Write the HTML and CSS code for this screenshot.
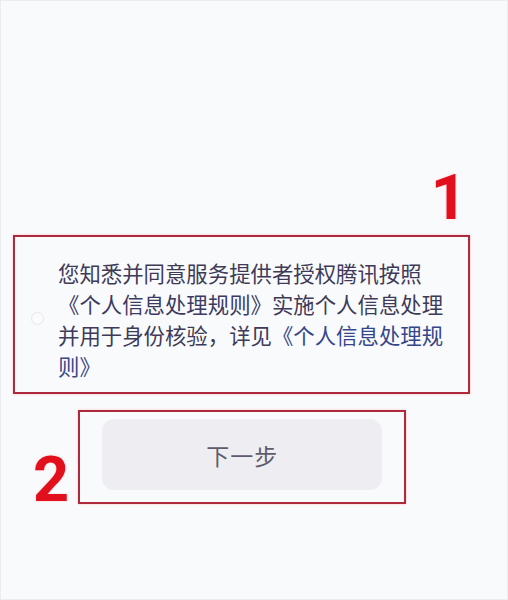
FILE: index.html
```html
<!DOCTYPE html>
<html lang="zh-CN">
<head>
<meta charset="utf-8">
<link rel="stylesheet" href="styles.css">
</head>
<body>
<div class="page">
  <div class="marker-row">
    <span class="marker">1</span>
  </div>
  <div class="frame frame-consent">
    <span class="radio"></span>
    <p class="consent"><span>您知悉并同意服务提供者授权腾讯按照</span><span class="link">《个人信息处理规则》</span><span>实施个人信息处理</span><span>并用于身份核验，详见</span><span class="link link-blue">《个人信息处理规</span><span class="link link-blue">则》</span></p>
  </div>
  <div class="button-row">
    <span class="marker">2</span>
    <div class="frame frame-button">
      <div class="next-btn">下一步</div>
    </div>
  </div>
</div>
</body>
</html>
```

FILE: styles.css
```css
html, body {
  margin: 0;
  padding: 0;
}

body {
  width: 508px;
  height: 600px;
  background: #f9fafc;
  font-family: "Noto Sans CJK SC", "Noto Sans", sans-serif;
  box-sizing: border-box;
  border: 1px solid #ececf0;
  overflow: hidden;
}

.page {
  display: flex;
  flex-direction: column;
  padding-top: 174px;
}

.marker-row {
  display: flex;
  justify-content: flex-end;
  padding-right: 40px;
}

.marker {
  font-family: Roboto, "Liberation Sans", Arial, sans-serif;
  font-weight: bold;
  font-size: 63px;
  line-height: 46px;
  height: 46px;
  color: #e2101c;
  text-shadow: 0 0 2px rgba(255, 80, 80, 0.35);
}

.frame {
  box-sizing: border-box;
  border: 2px solid #ad2a3c;
  box-shadow: 0 0 2px rgba(255, 60, 60, 0.35);
}

.frame-consent {
  margin-top: 14px;
  margin-left: 12px;
  width: 457px;
  height: 159px;
  display: flex;
  align-items: center;
  padding: 8px 0 0 16px;
}

.radio {
  flex: none;
  width: 11px;
  height: 11px;
  border-radius: 50%;
  border: 1px solid #e6e6ec;
  background: #fbfbfd;
  margin-right: 14px;
}

.consent {
  margin: 0;
  width: 18.3em;
  font-size: 21.4px;
  line-height: 31px;
  color: #3e3a58;
}

.link {
  color: #3b3a62;
}

.link-blue {
  color: #36468a;
}

.button-row {
  display: flex;
  align-items: flex-end;
  margin-top: 16px;
  padding-left: 32px;
  gap: 9px;
}

.button-row .marker {
  height: auto;
  margin-bottom: 1px;
}

.frame-button {
  width: 328px;
  height: 94px;
  padding: 7px 22px 12px 22px;
}

.next-btn {
  height: 100%;
  border-radius: 12px;
  background: #eeeef2;
  display: flex;
  align-items: center;
  justify-content: center;
  font-size: 23px;
  color: #5e5c6c;
  letter-spacing: 1px;
}
```
